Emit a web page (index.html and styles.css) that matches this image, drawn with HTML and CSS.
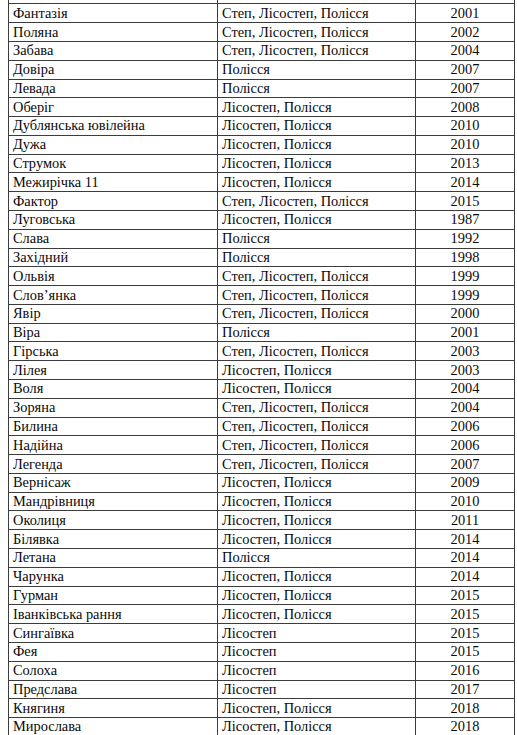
FILE: index.html
```html
<!DOCTYPE html>
<html lang="uk">
<head>
<meta charset="utf-8">
<title>Сорти</title>
<link rel="stylesheet" href="styles.css">
</head>
<body>
<table class="varieties">
<colgroup><col class="c-name"><col class="c-zone"><col class="c-year"></colgroup>
<tbody>
<tr class="head"><td></td><td></td><td></td></tr>
<tr><td>Фантазія</td><td>Степ, Лісостеп, Полісся</td><td class="yr">2001</td></tr>
<tr><td>Поляна</td><td>Степ, Лісостеп, Полісся</td><td class="yr">2002</td></tr>
<tr><td>Забава</td><td>Степ, Лісостеп, Полісся</td><td class="yr">2004</td></tr>
<tr><td>Довіра</td><td>Полісся</td><td class="yr">2007</td></tr>
<tr><td>Левада</td><td>Полісся</td><td class="yr">2007</td></tr>
<tr><td>Оберіг</td><td>Лісостеп, Полісся</td><td class="yr">2008</td></tr>
<tr><td>Дублянська ювілейна</td><td>Лісостеп, Полісся</td><td class="yr">2010</td></tr>
<tr><td>Дужа</td><td>Лісостеп, Полісся</td><td class="yr">2010</td></tr>
<tr><td>Струмок</td><td>Лісостеп, Полісся</td><td class="yr">2013</td></tr>
<tr><td>Межирічка 11</td><td>Лісостеп, Полісся</td><td class="yr">2014</td></tr>
<tr><td>Фактор</td><td>Степ, Лісостеп, Полісся</td><td class="yr">2015</td></tr>
<tr><td>Луговська</td><td>Лісостеп, Полісся</td><td class="yr">1987</td></tr>
<tr><td>Слава</td><td>Полісся</td><td class="yr">1992</td></tr>
<tr><td>Західний</td><td>Полісся</td><td class="yr">1998</td></tr>
<tr><td>Ольвія</td><td>Степ, Лісостеп, Полісся</td><td class="yr">1999</td></tr>
<tr><td>Слов’янка</td><td>Степ, Лісостеп, Полісся</td><td class="yr">1999</td></tr>
<tr><td>Явір</td><td>Степ, Лісостеп, Полісся</td><td class="yr">2000</td></tr>
<tr><td>Віра</td><td>Полісся</td><td class="yr">2001</td></tr>
<tr><td>Гірська</td><td>Степ, Лісостеп, Полісся</td><td class="yr">2003</td></tr>
<tr><td>Лілея</td><td>Лісостеп, Полісся</td><td class="yr">2003</td></tr>
<tr><td>Воля</td><td>Лісостеп, Полісся</td><td class="yr">2004</td></tr>
<tr><td>Зоряна</td><td>Степ, Лісостеп, Полісся</td><td class="yr">2004</td></tr>
<tr><td>Билина</td><td>Степ, Лісостеп, Полісся</td><td class="yr">2006</td></tr>
<tr><td>Надійна</td><td>Степ, Лісостеп, Полісся</td><td class="yr">2006</td></tr>
<tr><td>Легенда</td><td>Степ, Лісостеп, Полісся</td><td class="yr">2007</td></tr>
<tr><td>Вернісаж</td><td>Лісостеп, Полісся</td><td class="yr">2009</td></tr>
<tr><td>Мандрівниця</td><td>Лісостеп, Полісся</td><td class="yr">2010</td></tr>
<tr><td>Околиця</td><td>Лісостеп, Полісся</td><td class="yr">2011</td></tr>
<tr><td>Білявка</td><td>Лісостеп, Полісся</td><td class="yr">2014</td></tr>
<tr><td>Летана</td><td>Полісся</td><td class="yr">2014</td></tr>
<tr><td>Чарунка</td><td>Лісостеп, Полісся</td><td class="yr">2014</td></tr>
<tr><td>Гурман</td><td>Лісостеп, Полісся</td><td class="yr">2015</td></tr>
<tr><td>Іванківська рання</td><td>Лісостеп, Полісся</td><td class="yr">2015</td></tr>
<tr><td>Сингаївка</td><td>Лісостеп</td><td class="yr">2015</td></tr>
<tr><td>Фея</td><td>Лісостеп</td><td class="yr">2015</td></tr>
<tr><td>Солоха</td><td>Лісостеп</td><td class="yr">2016</td></tr>
<tr><td>Предслава</td><td>Лісостеп</td><td class="yr">2017</td></tr>
<tr><td>Княгиня</td><td>Лісостеп, Полісся</td><td class="yr">2018</td></tr>
<tr><td>Мирослава</td><td>Лісостеп, Полісся</td><td class="yr">2018</td></tr>
</tbody>
</table>
</body>
</html>
```
FILE: styles.css
```css
html, body {
  background: #ffffff;
}
body {
  margin: 0 0 0 8px;
  overflow: hidden;
  font-family: "Liberation Serif", "Times New Roman", serif;
  font-size: 14.4px;
  color: #0a0a0a;
}
.varieties {
  border-collapse: collapse;
  width: 506px;
  margin-top: -15.4px;
  table-layout: fixed;
}
.c-name { width: 209px; }
.c-zone { width: 198px; }
.c-year { width: 99px; }
.varieties td {
  border: 1px solid #3c3c3c;
  height: 17.79px;
  padding: 0 4px;
  line-height: 15px;
  white-space: nowrap;
  vertical-align: middle;
}
.varieties td.yr {
  text-align: center;
}
```
